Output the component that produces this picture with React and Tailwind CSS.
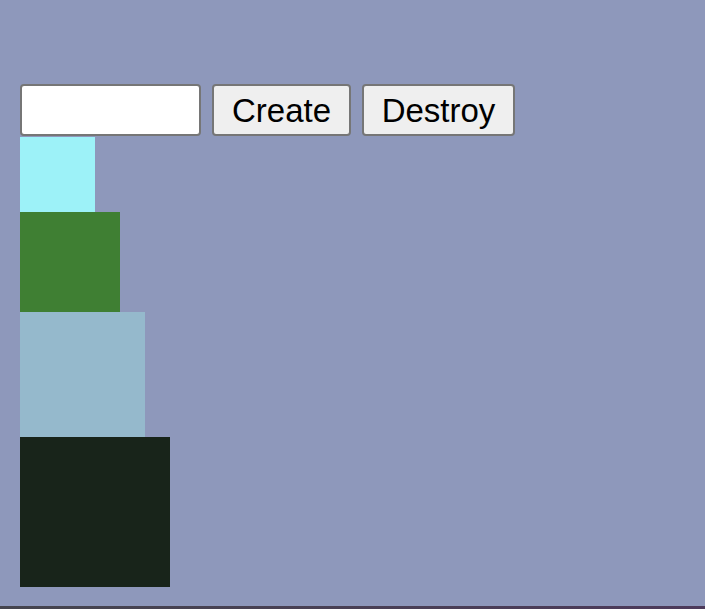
import React from 'react';

// boxes stacked under the controls
const boxes = [
  { size: 75, color: '#9df2f8' },
  { size: 100, color: '#3f7f33' },
  { size: 125, color: '#95b9cc' },
  { size: 150, color: '#18241a' },
];

export default function App() {
  return (
    <div className="w-[705px] h-[609px] bg-[#8e98bb] flex flex-col overflow-hidden" style={{ fontFamily: '"Liberation Sans", Arial, sans-serif' }}>
      <div className="flex-1 pt-[84px] pl-[20px]">
        {/* controls */}
        <div className="flex items-center gap-[11px]">
          <input
            type="text"
            className="w-[181px] h-[52px] bg-white border-2 border-[#767676] rounded-[4px] px-2 text-[33px] outline-none"
          />
          <button className="w-[139px] h-[52px] bg-[#efefef] border-2 border-[#767676] rounded-[4px] text-[33px] text-black leading-none">
            Create
          </button>
          <button className="w-[153px] h-[52px] bg-[#efefef] border-2 border-[#767676] rounded-[4px] text-[33px] text-black leading-none">
            Destroy
          </button>
        </div>

        {/* boxes */}
        <div className="flex flex-col items-start mt-px">
          {boxes.map((b, i) => (
            <div key={i} style={{ width: b.size, height: b.size, background: b.color }} />
          ))}
        </div>
      </div>
      <div className="h-[3px] shrink-0 bg-gradient-to-r from-[#45454e] to-[#4d3a5b]" />
    </div>
  );
}
